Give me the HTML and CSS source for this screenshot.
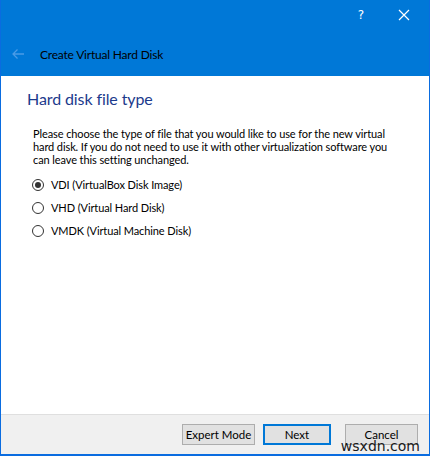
FILE: index.html
```html
<!DOCTYPE html>
<html>
<head>
<meta charset="utf-8">
<link rel="stylesheet" href="styles.css">
</head>
<body>
<div class="window">
  <div class="titlebar">
    <div class="caption-buttons">
      <span class="help">?</span>
      <svg class="close" width="12" height="12" viewBox="0 0 12 12"><path d="M1 1L11 11M11 1L1 11" stroke="#fff" stroke-width="1.2" fill="none"/></svg>
    </div>
    <div class="nav">
      <svg class="back" width="14" height="12" viewBox="0 0 14 12"><path d="M13 6H2M6.5 1.5L2 6l4.5 4.5" stroke="#4a9be6" stroke-width="1.3" fill="none"/></svg>
      <span class="wizard-title">Create Virtual Hard Disk</span>
    </div>
  </div>
  <div class="content">
    <h1 class="heading">Hard disk file type</h1>
    <p class="desc">Please choose the type of file that you would like to use for the new virtual<br>hard disk. If you do not need to use it with other virtualization software you<br>can leave this setting unchanged.</p>
    <div class="options">
      <label class="option"><span class="radio checked"></span>VDI (VirtualBox Disk Image)</label>
      <label class="option"><span class="radio"></span>VHD (Virtual Hard Disk)</label>
      <label class="option"><span class="radio"></span>VMDK (Virtual Machine Disk)</label>
    </div>
  </div>
  <div class="footer">
    <button class="btn">Expert Mode</button>
    <button class="btn default">Next</button>
    <button class="btn">Cancel</button>
    <span class="watermark">wsxdn.com</span>
  </div>
</div>
</body>
</html>
```
FILE: styles.css
```css
html, body {
  margin: 0;
  padding: 0;
}
body {
  font-family: "Lato", "Noto Sans", sans-serif;
  font-size: 11px;
  background: #0078d7;
}
.window {
  width: 430px;
  height: 456px;
  box-sizing: border-box;
  background: #0078d7;
  border-left: 1px solid #0a6ce0;
  border-right: 1px solid #0a6ce0;
  border-bottom: 2px solid #0a6ce0;
  display: flex;
  flex-direction: column;
}
.titlebar {
  height: 76px;
  display: flex;
  flex-direction: column;
  flex-shrink: 0;
}
.caption-buttons {
  height: 32px;
  display: flex;
  justify-content: flex-end;
  align-items: center;
  padding-right: 19px;
  gap: 34px;
}
.help {
  color: #fff;
  font-family: "DejaVu Sans", sans-serif;
  font-size: 12px;
  line-height: 14px;
  margin-top: -2px;
}
.close {
  margin-top: -2px;
}
.nav {
  flex: 1;
  display: flex;
  align-items: center;
  padding-left: 10px;
}
.back {
  margin-right: 15px;
}
.wizard-title {
  color: #000;
  font-size: 12px;
  letter-spacing: -0.2px;
}
.content {
  flex: 1;
  background: #fff;
  padding: 12px 0 0 26px;
}
.heading {
  margin: 0;
  font-weight: normal;
  font-size: 16px;
  letter-spacing: -0.1px;
  line-height: 22px;
  color: #1c3a8c;
}
.desc {
  margin: 17px 0 0 6px;
  font-size: 11px;
  letter-spacing: -0.1px;
  line-height: 13px;
  white-space: nowrap;
  color: #000;
}
.options {
  margin: 11px 0 0 5px;
  display: flex;
  flex-direction: column;
  gap: 7px;
}
.option {
  display: flex;
  align-items: center;
  height: 16px;
  line-height: 16px;
  color: #000;
  font-size: 11px;
  letter-spacing: -0.1px;
}
.radio {
  width: 12px;
  height: 12px;
  border: 1px solid #333;
  border-radius: 50%;
  box-sizing: border-box;
  margin-right: 7px;
  display: inline-flex;
  align-items: center;
  justify-content: center;
  background: #fff;
}
.radio.checked::after {
  content: "";
  width: 6px;
  height: 6px;
  border-radius: 50%;
  background: #333;
}
.footer {
  position: relative;
  height: 39px;
  flex-shrink: 0;
  background: #f0f0f0;
  border-top: 1px solid #dfdfdf;
  display: flex;
  align-items: center;
  justify-content: flex-end;
  padding-right: 11px;
  gap: 8px;
}
.btn {
  width: 73px;
  height: 21px;
  box-sizing: border-box;
  background: #e1e1e1;
  border: 1px solid #adadad;
  font-family: "Lato", "Noto Sans", sans-serif;
  font-size: 11.5px;
  color: #000;
  padding: 0;
  margin: 0;
}
.btn.default {
  width: 68px;
  border: 2px solid #0078d7;
  margin-right: 6px;
}
.watermark {
  position: absolute;
  right: 9px;
  bottom: 0;
  font-family: "DejaVu Sans", sans-serif;
  font-size: 14px;
  line-height: 16px;
  color: #1a1a1a;
}
```
